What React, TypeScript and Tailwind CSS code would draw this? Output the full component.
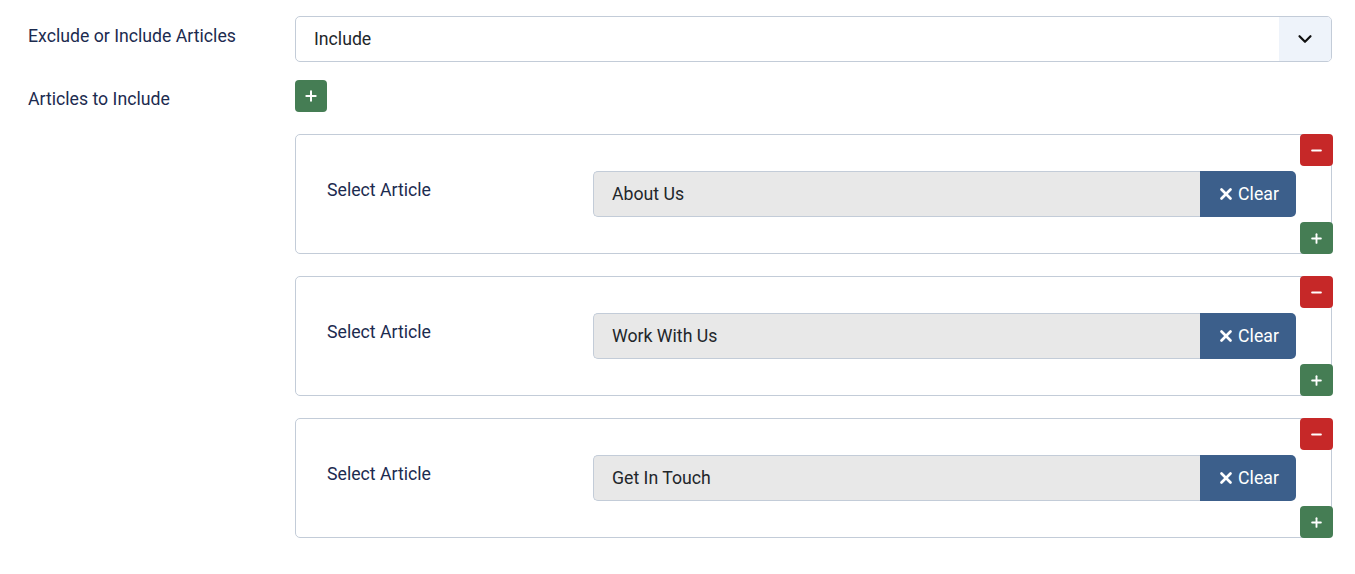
import { ChevronDown, Plus, Minus, X } from "lucide-react";

const articles = ["About Us", "Work With Us", "Get In Touch"];

function ArticleRow({ title }: { title: string }) {
  return (
    <div className="relative flex rounded-[5px] border border-[#c3ccd8] px-[31px] pt-[36px] pb-[36px]">
      <div className="w-[266px] shrink-0 pt-[7px] text-[17.7px] leading-[24px] text-[#1c2b4f]">Select Article</div>
      <div className="mr-[4px] flex h-[46px] flex-1">
        <div className="flex flex-1 items-center rounded-l-[5px] border border-r-0 border-[#c3ccd8] bg-[#e8e8e8] px-[18px] text-[17.7px] text-[#22262a]">
          {title}
        </div>
        <button className="flex w-[96px] items-center justify-center gap-[3px] rounded-r-[5px] bg-[#3c5f8b] text-[17.7px] text-white">
          <X size={18} strokeWidth={3.6} />
          Clear
        </button>
      </div>
      <button className="absolute -top-px -right-[2px] flex h-[32px] w-[33px] items-center justify-center rounded-[4px] bg-[#c62828] text-white">
        <Minus size={15} strokeWidth={3.2} />
      </button>
      <button className="absolute -bottom-px -right-[2px] flex h-[32px] w-[33px] items-center justify-center rounded-[4px] bg-[#457d54] text-white">
        <Plus size={15} strokeWidth={3} />
      </button>
    </div>
  );
}

export default function App() {
  return (
    <div className="min-h-screen bg-white pt-[16px] pr-[23px] pl-[28px] font-['Roboto',sans-serif]">
      <div className="grid grid-cols-[267px_1fr] gap-y-[18px]">
        <div className="pt-[8px] text-[17.7px] leading-[24px] text-[#1c2b4f]">Exclude or Include Articles</div>
        <div className="flex h-[46px] overflow-hidden rounded-[5px] border border-[#c3ccd8]">
          <div className="flex flex-1 items-center px-[18px] text-[17.7px] text-[#22262a]">Include</div>
          <div className="flex w-[52px] items-center justify-center bg-[#eef3fa]">
            <ChevronDown size={22} strokeWidth={2.4} className="text-[#111]" />
          </div>
        </div>

        <div className="pt-[7px] text-[17.7px] leading-[24px] text-[#1c2b4f]">Articles to Include</div>
        <div className="flex flex-col gap-[22px]">
          <button className="flex h-[32px] w-[32px] items-center justify-center rounded-[4px] bg-[#457d54] text-white">
            <Plus size={16} strokeWidth={3} />
          </button>
          {articles.map((a) => (
            <ArticleRow key={a} title={a} />
          ))}
        </div>
      </div>
    </div>
  );
}
